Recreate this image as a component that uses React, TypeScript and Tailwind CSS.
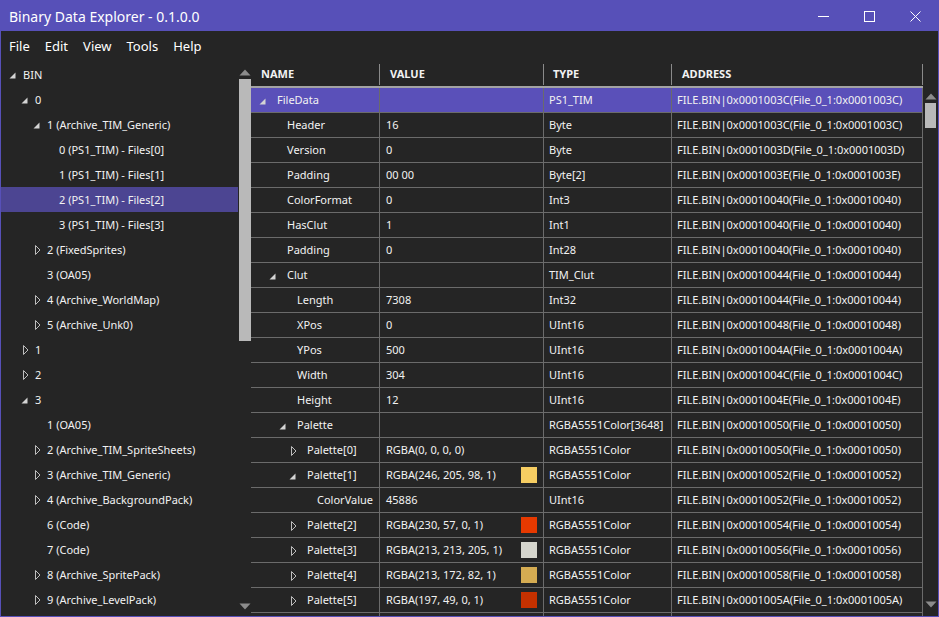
import React from 'react';

type TreeItem = { label: string; level: number; state: 'open' | 'closed' | 'leaf'; selected?: boolean };

const tree: TreeItem[] = [
  { label: 'BIN', level: 0, state: 'open' },
  { label: '0', level: 1, state: 'open' },
  { label: '1 (Archive_TIM_Generic)', level: 2, state: 'open' },
  { label: '0 (PS1_TIM) - Files[0]', level: 3, state: 'leaf' },
  { label: '1 (PS1_TIM) - Files[1]', level: 3, state: 'leaf' },
  { label: '2 (PS1_TIM) - Files[2]', level: 3, state: 'leaf', selected: true },
  { label: '3 (PS1_TIM) - Files[3]', level: 3, state: 'leaf' },
  { label: '2 (FixedSprites)', level: 2, state: 'closed' },
  { label: '3 (OA05)', level: 2, state: 'leaf' },
  { label: '4 (Archive_WorldMap)', level: 2, state: 'closed' },
  { label: '5 (Archive_Unk0)', level: 2, state: 'closed' },
  { label: '1', level: 1, state: 'closed' },
  { label: '2', level: 1, state: 'closed' },
  { label: '3', level: 1, state: 'open' },
  { label: '1 (OA05)', level: 2, state: 'leaf' },
  { label: '2 (Archive_TIM_SpriteSheets)', level: 2, state: 'closed' },
  { label: '3 (Archive_TIM_Generic)', level: 2, state: 'closed' },
  { label: '4 (Archive_BackgroundPack)', level: 2, state: 'closed' },
  { label: '6 (Code)', level: 2, state: 'leaf' },
  { label: '7 (Code)', level: 2, state: 'leaf' },
  { label: '8 (Archive_SpritePack)', level: 2, state: 'closed' },
  { label: '9 (Archive_LevelPack)', level: 2, state: 'closed' },
];

type Row = {
  name: string;
  level: number;
  state: 'open' | 'closed' | 'leaf';
  value: string;
  type: string;
  addr: string;
  swatch?: string;
  selected?: boolean;
};

const rows: Row[] = [
  { name: 'FileData', level: 0, state: 'open', value: '', type: 'PS1_TIM', addr: '0x0001003C', selected: true },
  { name: 'Header', level: 1, state: 'leaf', value: '16', type: 'Byte', addr: '0x0001003C' },
  { name: 'Version', level: 1, state: 'leaf', value: '0', type: 'Byte', addr: '0x0001003D' },
  { name: 'Padding', level: 1, state: 'leaf', value: '00 00', type: 'Byte[2]', addr: '0x0001003E' },
  { name: 'ColorFormat', level: 1, state: 'leaf', value: '0', type: 'Int3', addr: '0x00010040' },
  { name: 'HasClut', level: 1, state: 'leaf', value: '1', type: 'Int1', addr: '0x00010040' },
  { name: 'Padding', level: 1, state: 'leaf', value: '0', type: 'Int28', addr: '0x00010040' },
  { name: 'Clut', level: 1, state: 'open', value: '', type: 'TIM_Clut', addr: '0x00010044' },
  { name: 'Length', level: 2, state: 'leaf', value: '7308', type: 'Int32', addr: '0x00010044' },
  { name: 'XPos', level: 2, state: 'leaf', value: '0', type: 'UInt16', addr: '0x00010048' },
  { name: 'YPos', level: 2, state: 'leaf', value: '500', type: 'UInt16', addr: '0x0001004A' },
  { name: 'Width', level: 2, state: 'leaf', value: '304', type: 'UInt16', addr: '0x0001004C' },
  { name: 'Height', level: 2, state: 'leaf', value: '12', type: 'UInt16', addr: '0x0001004E' },
  { name: 'Palette', level: 2, state: 'open', value: '', type: 'RGBA5551Color[3648]', addr: '0x00010050' },
  { name: 'Palette[0]', level: 3, state: 'closed', value: 'RGBA(0, 0, 0, 0)', type: 'RGBA5551Color', addr: '0x00010050' },
  { name: 'Palette[1]', level: 3, state: 'open', value: 'RGBA(246, 205, 98, 1)', type: 'RGBA5551Color', addr: '0x00010052', swatch: '#f6cd62' },
  { name: 'ColorValue', level: 4, state: 'leaf', value: '45886', type: 'UInt16', addr: '0x00010052' },
  { name: 'Palette[2]', level: 3, state: 'closed', value: 'RGBA(230, 57, 0, 1)', type: 'RGBA5551Color', addr: '0x00010054', swatch: '#e63900' },
  { name: 'Palette[3]', level: 3, state: 'closed', value: 'RGBA(213, 213, 205, 1)', type: 'RGBA5551Color', addr: '0x00010056', swatch: '#d5d5cd' },
  { name: 'Palette[4]', level: 3, state: 'closed', value: 'RGBA(213, 172, 82, 1)', type: 'RGBA5551Color', addr: '0x00010058', swatch: '#d5ac52' },
  { name: 'Palette[5]', level: 3, state: 'closed', value: 'RGBA(197, 49, 0, 1)', type: 'RGBA5551Color', addr: '0x0001005A', swatch: '#c53100' },
];

// small expander glyphs, WPF style
function Expander({ state, box }: { state: 'open' | 'closed' | 'leaf'; box: number }) {
  return (
    <svg width={box} height={12} viewBox={`0 0 ${box} 12`} className="shrink-0">
      {state === 'open' && <polygon points="6.5,3.5 6.5,9.5 0.5,9.5" fill="#d4d4d4" />}
      {state === 'closed' && <polygon points="2.5,1.5 7,6 2.5,10.5" fill="none" stroke="#bdbdbd" strokeWidth="1" />}
    </svg>
  );
}

function ScrollArrow({ up }: { up?: boolean }) {
  return (
    <svg width="12" height="7" viewBox="0 0 12 7">
      <polygon points={up ? '6,0.5 11.5,6.5 0.5,6.5' : '0.5,0.5 11.5,0.5 6,6.5'} fill="#8c8c8c" />
    </svg>
  );
}

export default function App() {
  const font = "font-['Noto_Sans',sans-serif]";
  return (
    <div className={`w-[939px] h-[617px] flex flex-col bg-[#252525] border border-[#5750b8] text-[#f2f2f2] overflow-hidden ${font}`}>
      {/* title bar */}
      <div className="h-[30px] shrink-0 bg-[#5750b8] flex items-center pl-[8px]">
        <span className="text-[14px] text-white">Binary Data Explorer - 0.1.0.0</span>
        <div className="ml-auto flex items-center h-full">
          <div className="w-[46px] h-full flex items-center justify-center">
            <svg width="11" height="11" viewBox="0 0 11 11"><line x1="0" y1="5.5" x2="11" y2="5.5" stroke="#fff" strokeWidth="1" /></svg>
          </div>
          <div className="w-[46px] h-full flex items-center justify-center">
            <svg width="11" height="11" viewBox="0 0 11 11"><rect x="0.5" y="0.5" width="10" height="10" fill="none" stroke="#fff" strokeWidth="1" /></svg>
          </div>
          <div className="w-[46px] h-full flex items-center justify-center">
            <svg width="11" height="11" viewBox="0 0 11 11"><path d="M0.5 0.5 L10.5 10.5 M10.5 0.5 L0.5 10.5" stroke="#fff" strokeWidth="1" /></svg>
          </div>
        </div>
      </div>

      {/* menu */}
      <div className="h-[31px] shrink-0 flex items-center gap-[15px] pl-[8px] pt-[1px] text-[13px] text-white">
        <span>File</span>
        <span>Edit</span>
        <span>View</span>
        <span>Tools</span>
        <span>Help</span>
      </div>

      <div className="flex-1 flex min-h-0">
        {/* tree */}
        <div className="w-[237px] shrink-0 flex flex-col text-[11px]">
          {tree.map((t, i) => (
            <div
              key={i}
              className={`h-[25px] flex items-center shrink-0 pt-[1px] ${t.selected ? 'bg-[#4c4592]' : ''}`}
              style={{ paddingLeft: 8 + t.level * 12 }}
            >
              <Expander state={t.state} box={14} />
              <span className="whitespace-nowrap">{t.label}</span>
            </div>
          ))}
        </div>
        <div className="w-[13px] shrink-0 flex flex-col items-center pt-[7px] pb-[6px]">
          <ScrollArrow up />
          <div className="w-[12px] h-[262px] bg-[#b9b9b9] mt-[3px]" />
          <div className="flex-1" />
          <ScrollArrow />
        </div>

        {/* grid */}
        <div className="w-[672px] shrink-0 flex flex-col text-[11px]">
          <div className="h-[26px] shrink-0 flex border-b-2 border-[#a3a3a3] font-bold pt-[1px]">
            <div className="w-[129px] border-r border-[#8a8a8a] my-[1px] pl-[10px] flex items-center">NAME</div>
            <div className="w-[164px] border-r border-[#8a8a8a] my-[1px] pl-[10px] flex items-center">VALUE</div>
            <div className="w-[128px] border-r border-[#8a8a8a] my-[1px] pl-[9px] flex items-center">TYPE</div>
            <div className="w-[251px] border-r border-[#8a8a8a] my-[1px] pl-[10px] flex items-center">ADDRESS</div>
          </div>
          {rows.map((r, i) => (
            <div
              key={i}
              className={`h-[25px] shrink-0 flex border-b border-[#6b6b6b] ${r.selected ? 'bg-[#5a50b9]' : ''}`}
            >
              <div className="w-[129px] border-r border-[#6b6b6b] flex items-center overflow-hidden pt-[1px]" style={{ paddingLeft: 8 + r.level * 10 }}>
                <Expander state={r.state} box={18} />
                <span className="whitespace-nowrap">{r.name}</span>
              </div>
              <div className="w-[164px] border-r border-[#6b6b6b] flex items-center pl-[6px] pr-[6px]">
                <span className="whitespace-nowrap pt-[1px]">{r.value}</span>
                {r.swatch && <div className="ml-auto w-[16px] h-[16px]" style={{ backgroundColor: r.swatch }} />}
              </div>
              <div className="w-[128px] border-r border-[#6b6b6b] flex items-center pl-[5px] overflow-hidden pt-[1px]">
                <span className="whitespace-nowrap">{r.type}</span>
              </div>
              <div className="w-[251px] border-r border-[#6b6b6b] flex items-center pl-[5px] overflow-hidden pt-[1px]">
                <span className="whitespace-nowrap">{`FILE.BIN|${r.addr}(File_0_1:${r.addr})`}</span>
              </div>
            </div>
          ))}
          <div className="flex-1 flex">
            <div className="w-[129px] border-r border-[#6b6b6b]" />
            <div className="w-[164px] border-r border-[#6b6b6b]" />
            <div className="w-[128px] border-r border-[#6b6b6b]" />
            <div className="w-[251px] border-r border-[#6b6b6b]" />
          </div>
        </div>
        <div className="flex-1 flex flex-col items-center pt-[31px] pb-[8px]">
          <ScrollArrow up />
          <div className="w-[11px] h-[25px] bg-[#b9b9b9] mt-[3px]" />
          <div className="flex-1" />
          <ScrollArrow />
        </div>
      </div>
    </div>
  );
}
